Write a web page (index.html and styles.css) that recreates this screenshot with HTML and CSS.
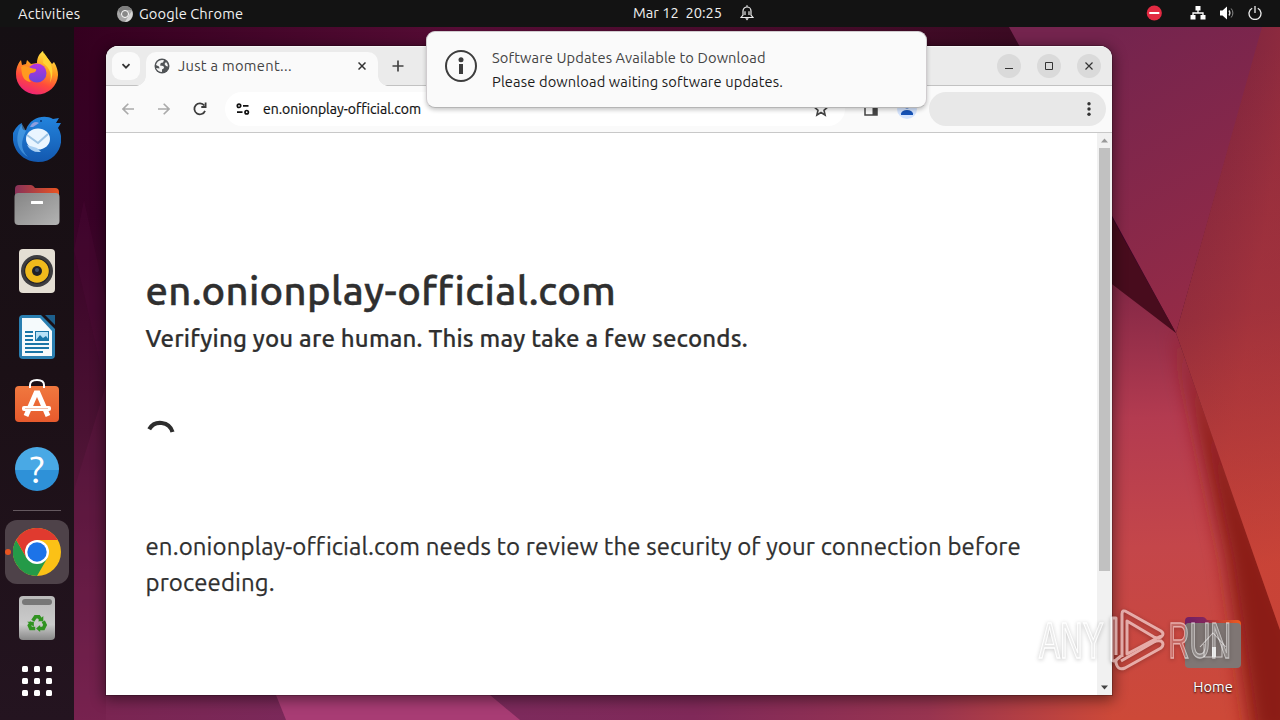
FILE: index.html
```html
<!DOCTYPE html>
<html lang="en">
<head>
<meta charset="utf-8">
<title>Desktop</title>
<link rel="stylesheet" href="styles.css">
</head>
<body>
<div class="desktop">
  <svg class="wallpaper" viewBox="0 0 1280 720" preserveAspectRatio="none">
    <defs>
      <linearGradient id="wl" x1="0" y1="0" x2="0" y2="1"><stop offset="0" stop-color="#34001f"/><stop offset=".3" stop-color="#390227"/><stop offset=".6" stop-color="#4b1233"/><stop offset="1" stop-color="#7d2652"/></linearGradient>
      <linearGradient id="wt" x1="0" y1="0" x2="1" y2="0"><stop offset="0" stop-color="#34001f"/><stop offset=".4" stop-color="#560c35"/><stop offset="1" stop-color="#3a0a22"/></linearGradient>
      <linearGradient id="wb" x1="0" y1="0" x2="1" y2="0"><stop offset="0" stop-color="#7a2552"/><stop offset=".25" stop-color="#7b2b5e"/><stop offset=".5" stop-color="#802959"/><stop offset=".7" stop-color="#983450"/><stop offset=".86" stop-color="#cd4938"/><stop offset="1" stop-color="#cd4938"/></linearGradient>
      <linearGradient id="wp" gradientUnits="userSpaceOnUse" x1="1060" y1="60" x2="1200" y2="330"><stop offset="0" stop-color="#74244e"/><stop offset="1" stop-color="#962b46"/></linearGradient>
      <linearGradient id="wr" gradientUnits="userSpaceOnUse" x1="1200" y1="60" x2="1290" y2="560"><stop offset="0" stop-color="#7d243f"/><stop offset=".5" stop-color="#942d3c"/><stop offset="1" stop-color="#cc4635"/></linearGradient>
      <linearGradient id="wrh" gradientUnits="userSpaceOnUse" x1="1225" y1="0" x2="1300" y2="12"><stop offset="0" stop-color="#b0383c" stop-opacity="0"/><stop offset="1" stop-color="#c03d3c" stop-opacity=".3"/></linearGradient>
      <linearGradient id="wm" gradientUnits="userSpaceOnUse" x1="1110" y1="290" x2="1125" y2="720"><stop offset="0" stop-color="#852846"/><stop offset=".3" stop-color="#b33b50"/><stop offset=".6" stop-color="#c4464a"/><stop offset="1" stop-color="#cd4938"/></linearGradient>
      <filter id="soft" x="-50%" y="-10%" width="200%" height="120%"><feGaussianBlur stdDeviation="10"/></filter>
    </defs>
    <rect width="1280" height="720" fill="url(#wl)"/>
    <path d="M74 250L106 390V300L84 200Z" fill="#520d3a" opacity=".25"/><path d="M74 490L106 385V720H74Z" fill="#6a1c49" opacity=".3"/>
    <rect x="74" y="20" width="960" height="60" fill="url(#wt)"/>
    <rect x="106" y="690" width="1174" height="30" fill="url(#wb)"/>
    <path d="M274 690L286 720H520L484 690Z" fill="#a83c74"/>
    <path d="M1112 270L1176 333L1280 630V720H1112Z" fill="url(#wm)"/>
    <path d="M1176 325L1300 630V740H1252L1226 560Z" fill="#8b1f18" filter="url(#soft)"/>
    <path d="M1009 27H1263L1176 333Z" fill="url(#wp)"/>
    <path d="M1262 27H1280V630L1176 333Z" fill="url(#wr)"/><path d="M1262 27H1280V630L1176 333Z" fill="url(#wrh)"/>
    <path d="M1100 196L1176 333L1100 275Z" fill="#480c1d"/>
  </svg>

  <header class="topbar">
    <span class="activities">Activities</span>
    <div class="app-menu">
      <svg width="16" height="16" viewBox="0 0 16 16"><circle cx="8" cy="8" r="8" fill="#a6a6a6"/><path d="M8 0A8 8 0 0 0 1 4L5 10A4 4 0 0 1 8 4H15A8 8 0 0 0 8 0Z" fill="#7d7d7d"/><path d="M8 16L12 9L15 5A8 8 0 0 1 8 16Z" fill="#d6d6d6"/><circle cx="8" cy="8" r="3.5" fill="#888" stroke="#fff"/></svg>
      <span class="app-name">Google Chrome</span>
    </div>
    <div class="clock"><span class="clock-text">Mar 12&nbsp; 20:25</span>
      <svg width="14" height="16" viewBox="0 0 14 16" fill="none" stroke="#eee" stroke-width="1.2"><path d="M1 12.5L3 10V6A4 4 0 0 1 11 6V10L13 12.5ZM5 6.2V10M9 6.2V10M7 2V.3"/><path d="M5.2 13.3H8.8L7 15.5Z" fill="#eee" stroke="none"/></svg>
    </div>
    <div class="tray">
      <svg width="16" height="16" viewBox="0 0 16 16"><circle cx="8.3" cy="8" r="7.6" fill="#e22a42"/><path d="M3.3 8H13.3" stroke="#fff" stroke-width="2"/></svg>
      <svg class="net" width="16" height="14" viewBox="0 0 16 14"><path d="M8 4V7M3 10V7H13V10" stroke="#fff" stroke-width="1.3" fill="none"/><path d="M5.5 0H10.5V4.5H5.5ZM.5 9H5.5V13.5H.5ZM10.5 9H15.5V13.5H10.5Z" fill="#fff"/></svg>
      <svg class="vol" width="16" height="14" viewBox="0 0 16 14" fill="none"><path d="M1 4.5H3.5L8 .5V13.5L3.5 9.5H1Z" fill="#fff"/><path d="M10 4.5Q11.8 7 10 9.5" stroke="#ddd" stroke-width="1.3"/><path d="M12.2 2.5Q15.6 7 12.2 11.5" stroke="#888"/></svg>
      <svg class="pow" width="14" height="14" viewBox="0 0 14 14" fill="none" stroke="#eee" stroke-width="1.3"><path d="M4.2 2.2A6 6 0 1 0 9.8 2.2M7 0V7"/></svg>
    </div>
  </header>

  <div class="body">
    <nav class="dock">
      <div class="tile"><svg width="44" height="44" viewBox="0 0 44 44"><defs><linearGradient id="ff" x1=".75" y1="0" x2=".35" y2="1"><stop offset="0" stop-color="#fff04a"/><stop offset=".4" stop-color="#ff9a20"/><stop offset=".7" stop-color="#ff4a3c"/><stop offset="1" stop-color="#ed2277"/></linearGradient><linearGradient id="fv" x1="0" y1="0" x2="0" y2="1"><stop offset="0" stop-color="#b833e1"/><stop offset="1" stop-color="#6a45d8"/></linearGradient></defs><path d="M1 23C1 16 4 11 6 9L7 14L11 13L12 9L16 13L22 12C22 6 25 2 28 0C29 5 34 8 37 13L39 11C42 16 43 20 43 24A21 20 0 0 1 1 23Z" fill="url(#ff)"/><circle cx="22" cy="22" r="9.5" fill="url(#fv)"/><path d="M6 16C11 13 15 18 21 18C22 21 18 22 16 22C13 24 13 28 16 31C6 30 7 20 6 16Z" fill="#ff9a20"/><path d="M29 2C37 12 40 20 35 32C38 20 32 15 28 12Z" fill="#ffd334"/></svg></div>
      <div class="tile"><svg width="48" height="48" viewBox="0 0 48 48"><defs><linearGradient id="tb" x1="0" y1="0" x2="0" y2="1"><stop offset="0" stop-color="#2384dd"/><stop offset="1" stop-color="#1358af"/></linearGradient></defs><path d="M0 18C3 12 6 9 9 8C8 13 10 16 13 15C17 2 32-1 40 4L46 3L43 8L48 8L45 13C53 25 46 47 25 47C11 47-2 36 0 18Z" fill="url(#tb)"/><path d="M9 9C2 20 2 34 15 42C7 34 8 26 13 16Z" fill="#5daff0" opacity=".55"/><ellipse cx="25" cy="24" rx="12" ry="10.5" fill="#eaf5ff"/><path d="M14 20L25 28L35 19" fill="none" stroke="#9ec4e5" stroke-width="2"/><path d="M14 30Q18 38 28 37L24 33Z" fill="#a9cff3"/><path d="M17 12C19 7 23 6 26 8L20 12Z" fill="#8e9fe0"/><circle cx="28" cy="6" r="1" fill="#09387a"/></svg></div>
      <div class="tile"><svg width="46" height="42" viewBox="0 0 46 42"><defs><linearGradient id="ft"><stop offset="0" stop-color="#873159"/><stop offset="1" stop-color="#ea5422"/></linearGradient><linearGradient id="fg" x1="0" y1="0" x2="1" y2="1"><stop offset="0" stop-color="#858585"/><stop offset="1" stop-color="#b3b3b3"/></linearGradient></defs><path d="M1 12V5Q1 1 5 1H17Q19 1 21 4H41Q45 4 45 8V14Z" fill="url(#ft)"/><rect x=".5" y="9" width="45" height="32" rx="4" fill="url(#fg)"/><rect x="17" y="17" width="12" height="3" rx=".5" fill="#fff"/></svg></div>
      <div class="tile"><svg width="38" height="46" viewBox="0 0 38 46"><rect x="1" y="1" width="36" height="44" rx="4" fill="#e4ded3"/><circle cx="19" cy="23" r="16" fill="#3e3d40"/><circle cx="19" cy="23" r="12.4" fill="#efb91c" stroke="#24232b" stroke-width="1.2"/><circle cx="19" cy="23" r="5" fill="#202127"/><circle cx="19" cy="22" r="2" fill="#415069"/></svg></div>
      <div class="tile"><svg width="38" height="46" viewBox="0 0 38 46"><path d="M1 5Q1 1 5 1H23L37 15V41Q37 45 33 45H5Q1 45 1 41Z" fill="#2a7fb1"/><path d="M4 4H22L34 17V42H4Z" fill="#f5fafc"/><path d="M27 1H37V11Z" fill="#1d5f8c"/><path d="M7 18H15M7 22H15M7 26H15M7 30H31M7 34H31M7 38H25" stroke="#1a76a7" stroke-width="1.8"/><rect x="17.5" y="17.5" width="13" height="9" fill="#b8e1f6" stroke="#1a76a7"/><path d="M18 26L22 21L25 24L28 22L31 26Z" fill="#1a76a7"/></svg></div>
      <div class="tile"><svg class="bag" width="46" height="46" viewBox="0 0 46 46"><defs><linearGradient id="sb" x1="0" y1="0" x2="0" y2="1"><stop offset="0" stop-color="#f0783f"/><stop offset="1" stop-color="#e75a2d"/></linearGradient></defs><rect x="1" y="8" width="44" height="36" rx="4" fill="url(#sb)"/><path d="M16 10V7Q16 2 23 2T30 7V10" fill="none" stroke="#fff" stroke-width="2"/><path d="M12 38L22 15H24L34 38" fill="none" stroke="#fff" stroke-width="5"/><rect x="8" y="28" width="29" height="5" rx="2" fill="#fff"/><path d="M11 30.5H34" stroke="#efb299" stroke-width=".8"/></svg></div>
      <div class="tile"><div class="help">?</div></div>
      <div class="separator"></div>
      <div class="tile active"><svg width="48" height="48" viewBox="0 0 48 48"><circle cx="24" cy="24" r="24" fill="#fbc116"/><path d="M24 24L34.4 30L24 48A24 24 0 0 1 3.2 12L13.6 30Z" fill="#249a48"/><path d="M24 12H44.8A24 24 0 0 0 3.2 12L13.6 30Z" fill="#e03a2f"/><circle cx="24" cy="24" r="12" fill="#fff"/><circle cx="24" cy="24" r="9.7" fill="#1c73e8"/></svg></div>
      <div class="tile"><svg width="38" height="46" viewBox="0 0 38 46"><defs><linearGradient id="tr" x1="0" y1="0" x2="0" y2="1"><stop offset="0" stop-color="#bababa"/><stop offset=".65" stop-color="#cbcbcb"/><stop offset="1" stop-color="#888"/></linearGradient></defs><rect x="1" y="1" width="36" height="44" rx="4" fill="url(#tr)"/><rect x="4" y="4" width="30" height="6" rx="3" fill="#777"/><g transform="translate(1.9 2) scale(.9)"><path d="M14.3 26.5L17.3 22H21L23.6 25.5M26 27L28 31L26 35H20.5M17 35H12L10.5 31.5L13 28" fill="none" stroke="#319321" stroke-width="4"/><path d="M20 27H26V21ZM22.5 31V39L18 35ZM8 27.5H15.5V33Z" fill="#319321"/></g></svg></div>
      <div class="apps"><i></i><i></i><i></i><i></i><i></i><i></i><i></i><i></i><i></i></div>
    </nav>

    <main class="workspace">
      <section class="window">
        <div class="tabstrip">
          <div class="tab-search"><svg width="10" height="7" viewBox="0 0 10 7" fill="none" stroke="#333" stroke-width="1.8"><path d="M1.5 1.2L5 4.7L8.5 1.2"/></svg></div>
          <div class="tab">
            <svg width="16" height="16" viewBox="0 0 16 16"><circle cx="8" cy="8" r="7.5" fill="#505356"/><path d="M8 2L10 2.3L9 4.5L6.8 5L6 7.5L9.3 8L10.2 10L8 11.5V14Q4 14 2 10L5.5 10.5L5 8.5L2 7Q3 2.5 8 2ZM12 4Q14 6 14 8.5L12 8L10.5 6Z" fill="#f5f5f5"/></svg>
            <span class="tab-title">Just a moment...</span>
            <svg class="tab-close" width="8" height="8" viewBox="0 0 8 8" stroke="#333" stroke-width="1.5"><path d="M.5.5L7.5 7.5M7.5.5L.5 7.5"/></svg>
          </div>
          <svg class="new-tab" width="12" height="12" viewBox="0 0 12 12" stroke="#444" stroke-width="1.7"><path d="M6 .5V11.5M.5 6H11.5"/></svg>
          <div class="controls">
            <span><svg width="8" height="8" viewBox="0 0 8 8" fill="none" stroke="#333"><path d="M0 6.5H8"/></svg></span>
            <span><svg width="8" height="8" viewBox="0 0 8 8" fill="none" stroke="#333"><path d="M.5.5H7.5V7.5H.5Z"/></svg></span>
            <span><svg width="8" height="8" viewBox="0 0 8 8" fill="none" stroke="#333" stroke-width="1.2"><path d="M.5.5L7.5 7.5M7.5.5L.5 7.5"/></svg></span>
          </div>
        </div>
        <div class="toolbar">
          <div class="nav">
            <svg width="12" height="12" viewBox="0 0 12 12" fill="none" stroke="#aaa" stroke-width="1.6"><path d="M12 6H1M6.3.7L1 6L6.3 11.3"/></svg>
            <svg width="12" height="12" viewBox="0 0 12 12" fill="none" stroke="#aaa" stroke-width="1.6"><path d="M0 6H11M5.7.7L11 6L5.7 11.3"/></svg>
            <svg width="14" height="14" viewBox="0 0 14 14" fill="none" stroke="#3c3c3c" stroke-width="1.8"><path d="M12 8.8A5.5 5.5 0 1 1 11.3 3.5M12.6.6V5H8.3"/></svg>
          </div>
          <div class="omnibox">
            <svg width="14" height="12" viewBox="0 0 14 12" fill="none" stroke="#111" stroke-width="1.7"><circle cx="3" cy="2.8" r="1.7"/><path d="M7 2.8H12.5M1 9.2H6.5"/><circle cx="10.7" cy="9.2" r="1.7"/></svg>
            <span class="url">en.onionplay-official.com</span>
            <svg class="star" width="16" height="16" viewBox="0 0 16 16" fill="none" stroke="#444" stroke-width="1.6"><path d="M8 1.5L9.9 5.8L14.5 6.2L11 9.3L12.1 14L8 11.5L3.9 14L5 9.3L1.5 6.2L6.1 5.8Z"/></svg>
          </div>
          <svg class="panel" width="14" height="14" viewBox="0 0 14 14"><path d="M1 1H13V13H1Z" fill="none" stroke="#444" stroke-width="1.5"/><path d="M8.5 1H13V13H8.5Z" fill="#444"/></svg>
          <svg class="avatar" width="20" height="20" viewBox="0 0 20 20"><circle cx="10" cy="10" r="10" fill="#d3e3fd"/><circle cx="10" cy="6.5" r="3" fill="#1551b5"/><path d="M4 16V14.5Q5 11 10 11T16 14.5V16Z" fill="#1551b5"/></svg>
          <div class="pill"><svg width="4" height="14" viewBox="0 0 4 14" fill="#333"><circle cx="2" cy="1.7" r="1.7"/><circle cx="2" cy="7" r="1.7"/><circle cx="2" cy="12.3" r="1.7"/></svg></div>
        </div>
        <div class="viewport">
          <article class="page">
            <h1>en.onionplay-official.com</h1>
            <h2>Verifying you are human. This may take a few seconds.</h2>
            <svg class="spinner" width="30" height="30" viewBox="0 0 30 30" fill="none" stroke="#2d2d2d" stroke-width="4.2"><path d="M3.2 10.3A12.8 12.8 0 0 1 26.5 13"/></svg>
            <p><span class="line1">en.onionplay-official.com needs to review the security of your connection before</span> <span class="line2">proceeding.</span></p>
          </article>
          <div class="scrollbar">
            <svg width="15" height="15" viewBox="0 0 15 15"><path d="M4 9.5L7.5 5.5L11 9.5Z" fill="#999"/></svg>
            <div class="thumb"></div>
            <svg width="15" height="15" viewBox="0 0 15 15"><path d="M4 5.5L7.5 9.5L11 5.5Z" fill="#444"/></svg>
          </div>
        </div>
      </section>
    </main>
  </div>

  <div class="home">
    <svg width="56" height="52" viewBox="0 0 56 52"><defs><linearGradient id="hm"><stop offset="0" stop-color="#702064"/><stop offset=".35" stop-color="#84265e"/><stop offset=".5" stop-color="#b83a3a"/><stop offset="1" stop-color="#ee5b1f"/></linearGradient></defs><path d="M0 14V4Q0 0 4 0H18Q20 0 22 3H52Q56 3 56 7V14Z" fill="url(#hm)"/><rect y="6" width="56" height="45" rx="4" fill="#7f7674"/><path d="M15 30L28 16L41 30M19 27V40H37V27" fill="none" stroke="#d5d0cf" stroke-width="1.1"/><path d="M27 30H31V40H27Z" fill="#eee"/></svg>
    <span class="home-label">Home</span>
  </div>

  <svg class="brand" width="250" height="76" viewBox="0 0 250 76">
    <g class="brand-text"><text transform="translate(9 55) scale(.63 1)">ANY</text><text transform="translate(138.5 55) scale(.58 1)">RUN</text></g>
    <g class="brand-mark"><path d="M86 52V15H82V57Q83 59 86 57L91 53M92 54V11Q92 6 97 9L131 28Q135 31 131 34Q128 36 124 34L97 18V51L131 33"/><path d="M86 57V60Q88 68 95 65L131 45Q135 41 131 38Q127 37 124 39L91 58"/></g>
  </svg>

  <aside class="notification">
    <svg width="34" height="34" viewBox="0 0 34 34"><circle cx="17" cy="17" r="15" fill="none" stroke="#3d3d3d" stroke-width="2"/><circle cx="17" cy="10.8" r="2.5" fill="#3d3d3d"/><path d="M15 15H19V25H15Z" fill="#3d3d3d"/></svg>
    <div class="notification-text"><div class="notification-title">Software Updates Available to Download</div><div class="notification-body">Please download waiting software updates.</div></div>
  </aside>
</div>
</body>
</html>
```
FILE: styles.css
```css
* { box-sizing: border-box; }
body { margin: 0; font-family: Ubuntu, "Noto Sans", sans-serif; overflow: hidden; }
svg { display: block; flex: none; }
span, h1, h2 { white-space: nowrap; }
.desktop { position: relative; width: 1280px; height: 720px; overflow: hidden; display: flex; flex-direction: column; }
.wallpaper { position: absolute; inset: 0; width: 1280px; height: 720px; }
.topbar { position: relative; height: 27px; background: #131313; color: #f0f0f0; font-size: 14.67px; letter-spacing: .1px; line-height: 27px; display: grid; grid-template-columns: 117px 516px 1fr auto; align-items: center; padding-right: 18px; }
.activities { padding-left: 18px; letter-spacing: .22px; }
.app-menu { display: flex; align-items: center; gap: 6px; }
.clock { display: flex; align-items: center; gap: 18px; letter-spacing: 0; }
.clock-text { line-height: 25px; padding-bottom: 2px; }
.clock svg { margin-top: -2px; }
.tray { display: flex; align-items: center; margin-top: -1px; }
.net { margin-left: 28px; }
.vol { margin-left: 13px; }
.pow { margin-left: 13px; }
.body { position: relative; flex: 1; display: flex; min-height: 0; }
.dock { width: 74px; background: linear-gradient(#150f13, #1b1016 50%, #241420); padding-top: 14px; display: flex; flex-direction: column; align-items: center; gap: 2px; flex: none; }
.tile { width: 64px; height: 64px; display: flex; align-items: center; justify-content: center; flex: none; border-radius: 12px; }
.bag { margin-bottom: 5px; }
.help { width: 44px; height: 44px; border-radius: 50%; background: linear-gradient(#49a9e5 0 52%, #2e91d8 52%); color: #fff; font-size: 38px; line-height: 44px; text-align: center; }
.separator { width: 48px; height: 1px; margin: 7px 0; background: #64585f; flex: none; }
.active { position: relative; background: #4e4249; }
.active::before { content: ""; position: absolute; left: 0; top: 29px; width: 6px; height: 6px; border-radius: 3px; background: #e95420; }
.apps { height: 58px; display: grid; grid-template-columns: repeat(3, 6px); grid-auto-rows: 6px; gap: 6px; align-content: center; flex: none; }
.apps i { border-radius: 1.5px; background: #fff; }
.workspace { flex: 1; padding: 19px 0 0 32px; }
.window { width: 1006px; height: 649px; background: #fff; border-radius: 12px 12px 0 0; box-shadow: 0 3px 14px 2px rgba(0,0,0,.45), 0 0 0 1px rgba(0,0,0,.2); overflow: hidden; display: flex; flex-direction: column; }
.tabstrip { height: 40px; background: #ebebeb; border-bottom: 1px solid #c2c2c2; box-shadow: inset 0 1px #f7f7f7; display: flex; padding: 6px 11px 0 6px; }
.tab-search { width: 28px; height: 28px; border-radius: 9px; background: #fafafa; display: flex; align-items: center; justify-content: center; }
.tab { position: relative; margin-left: 6px; width: 232px; height: 34px; background: #fafafa; border-radius: 10px 10px 0 0; display: flex; align-items: center; padding: 0 12px 6px 8px; gap: 8px; }
.tab::before, .tab::after { content: ""; position: absolute; bottom: 0; width: 10px; height: 10px; }
.tab::before { left: -10px; background: radial-gradient(circle at 0 0, transparent 9.5px, #fafafa 10px); }
.tab::after { right: -10px; background: radial-gradient(circle at 100% 0, transparent 9.5px, #fafafa 10px); }
.tab-title { font-size: 14.67px; letter-spacing: .3px; color: #444; flex: 1; margin-top: -2px; }
.new-tab { margin: 8px 0 0 14px; }
.controls { margin-left: auto; display: flex; gap: 16px; padding-top: 2px; }
.controls span { width: 24px; height: 24px; border-radius: 50%; background: #dadada; display: flex; align-items: center; justify-content: center; }
.toolbar { height: 47px; background: #fafafa; border-bottom: 1px solid #c8c8c8; display: flex; align-items: center; padding: 0 6px 0 16px; flex: none; }
.nav { display: flex; align-items: center; gap: 24px; width: 103px; }
.nav svg:last-child { margin-left: -1px; }
.omnibox { width: 620px; height: 34px; border-radius: 17px; background: #fff; display: flex; align-items: center; padding: 0 16px 0 11px; }
.url { font-size: 14px; color: #111; -webkit-text-stroke: .2px #111; margin-left: 13px; flex: 1; }
.panel { margin-left: 19px; }
.avatar { margin-left: 19px; }
.pill { margin-left: auto; width: 177px; height: 34px; border-radius: 17px; background: #e8e8e8; display: flex; align-items: center; justify-content: flex-end; padding-right: 15px; }
.viewport { flex: 1; display: flex; min-height: 0; }
.page { flex: 1; padding: 128px 40px 0; color: #2f2f2f; }
h1 { font-size: 40px; line-height: 60px; font-weight: 500; letter-spacing: .34px; margin: 0 0 0 -.5px; -webkit-text-stroke: .4px #2f2f2f; }
h2 { font-size: 24px; line-height: 36px; font-weight: 500; letter-spacing: .17px; margin: 0 0 0 -.5px; -webkit-text-stroke: .2px #2f2f2f; }
.spinner { margin: 62px 0 0; }
p { font-size: 24px; line-height: 36px; margin: 80px 0 0 -.5px; letter-spacing: .115px; -webkit-text-stroke: .25px #2f2f2f; }
.line1, .line2 { display: block; }
.scrollbar { width: 15px; background: #f1f1f1; display: flex; flex-direction: column; }
.thumb { width: 11px; height: 423px; margin: 0 0 auto 2px; background: #c1c1c1; }
.home { position: absolute; left: 1185px; top: 617px; width: 56px; display: flex; flex-direction: column; align-items: center; color: #fff; font-size: 14.67px; line-height: 20px; text-shadow: 0 1px 2px #000; }
.home-label { margin-top: 8px; }
.brand { position: absolute; left: 1030px; top: 603px; opacity: .55; filter: drop-shadow(0 1px 2px rgba(0,0,0,.5)); }
.brand-text { font: 50px "Liberation Sans", sans-serif; fill: rgba(255,255,255,.4); stroke: #fff; stroke-width: 1.4; }
.brand-mark { fill: none; stroke: #fff; stroke-width: 3; stroke-linejoin: round; }
.notification { position: absolute; left: 426px; top: 31px; width: 501px; height: 77px; background: #fafafa; border: 1px solid #d0cccf; border-bottom-color: #b5b5b5; border-radius: 9px; box-shadow: 0 2px 4px rgba(0,0,0,.22); display: flex; padding: 14px 17px; gap: 14px; }
.notification svg { margin-top: 3px; }
.notification-text { font-size: 14.67px; letter-spacing: .11px; line-height: 24px; white-space: nowrap; }
.notification-title { color: #444; }
.notification-body { color: #1c1c1c; letter-spacing: .13px; }
```
